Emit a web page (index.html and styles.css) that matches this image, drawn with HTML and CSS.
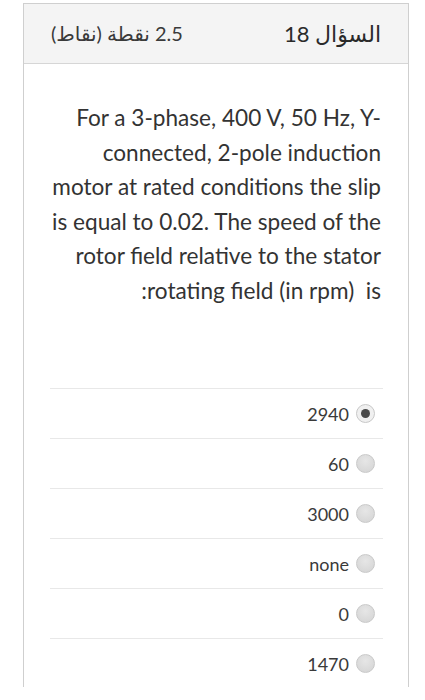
FILE: index.html
```html
<!DOCTYPE html>
<html lang="ar">
<head>
<meta charset="utf-8">
<link rel="stylesheet" href="styles.css">
</head>
<body>
<div class="card" dir="rtl">
  <div class="header">
    <span class="qnum">السؤال 18</span>
    <span class="points">2.5 نقطة (نقاط)</span>
  </div>
  <div class="content">
    <p class="question">For a 3-phase, 400 V, 50 Hz, Y-connected, 2-pole induction motor at rated conditions the slip is equal to 0.02. The speed of the rotor field relative to the stator rotating field (in rpm)&nbsp; is:</p>
    <ul class="options">
      <li class="option"><span class="radio checked"></span><span class="label">2940</span></li>
      <li class="option"><span class="radio"></span><span class="label">60</span></li>
      <li class="option"><span class="radio"></span><span class="label">3000</span></li>
      <li class="option"><span class="radio"></span><span class="label">none</span></li>
      <li class="option"><span class="radio"></span><span class="label">0</span></li>
      <li class="option"><span class="radio"></span><span class="label">1470</span></li>
    </ul>
  </div>
</div>
</body>
</html>
```
FILE: styles.css
```css
html, body {
  margin: 0;
  padding: 0;
  background: #ffffff;
}
body {
  font-family: "Lato", "DejaVu Sans", sans-serif;
  color: #3a3a3a;
  padding: 3px 0 0 0;
}
.card {
  margin: 0 auto 0 23px;
  width: 384px;
  height: 683px;
  border: 1px solid #cfcfcf;
  border-bottom: none;
  box-sizing: content-box;
  direction: rtl;
}
.header {
  height: 59px;
  background: #f4f4f4;
  border-bottom: 1px solid #d6d6d6;
  display: flex;
  align-items: center;
  justify-content: space-between;
  padding: 0 27px 0 27px;
}
.qnum {
  font-size: 22px;
  font-weight: 400;
  color: #2a2a2a;
}
.points {
  font-size: 20px;
  color: #3a3a3a;
}
.content {
  padding: 0 25px 0 26px;
}
.question {
  margin: 0;
  padding: 37px 2px 0 0;
  font-size: 22.6px;
  line-height: 34.5px;
  text-align: right;
  color: #333;
}
.options {
  list-style: none;
  margin: 80px 0 0 0;
  padding: 0;
}
.option {
  height: 49px;
  border-top: 1px solid #e8e8e8;
  display: flex;
  align-items: center;
  gap: 7px;
  padding-right: 8px;
}
.label {
  font-size: 18px;
  color: #3a3a3a;
}
.radio {
  width: 19px;
  height: 19px;
  border-radius: 50%;
  box-sizing: border-box;
  border: 1px solid #c9c9c9;
  background: radial-gradient(circle at 50% 35%, #e6e6e6 0%, #d3d3d3 100%);
  position: relative;
}
.radio.checked {
  background: #f0f0f0;
  border-color: #c8c8c8;
}
.radio.checked::after {
  content: "";
  position: absolute;
  left: 50%;
  top: 50%;
  width: 9px;
  height: 9px;
  margin: -4.5px 0 0 -4.5px;
  border-radius: 50%;
  background: #4a4a4a;
}
```
